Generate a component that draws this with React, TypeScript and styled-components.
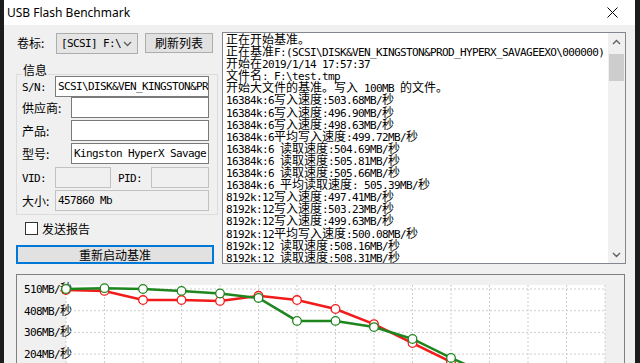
import React from 'react'
import styled, { createGlobalStyle } from 'styled-components'

const GlobalStyle = createGlobalStyle`
  html, body {
    margin: 0;
    padding: 0;
  }
  body {
    width: 640px;
    height: 363px;
    overflow: hidden;
    background: #1c1c1c;
    font-family: "Noto Sans CJK SC", "Noto Sans", sans-serif;
  }
`

const HAN = /([\u2e80-\u9fff\u3000-\u303f\uff00-\uffef]+)/

const Han = styled.span`
  font-family: "Noto Sans CJK SC", sans-serif;
  font-size: 12px;
  letter-spacing: 0;
`

const mixed = (text: string) =>
  text.split(HAN).map((part, i) => (i % 2 === 1 ? <Han key={i}>{part}</Han> : part))

const Window = styled.div`
  margin-left: 4px;
  width: 631px;
  height: 363px;
  overflow: hidden;
  background: #f0f0f0;
  display: flex;
  flex-direction: column;
`

const TitleBar = styled.div`
  flex: none;
  height: 25px;
  background: #fff;
  display: flex;
  align-items: center;
  justify-content: space-between;
  padding-left: 3px;
  font-family: "Noto Sans", sans-serif;
  font-size: 12px;
  color: #000;
`

const CloseButton = styled.div`
  width: 46px;
  height: 25px;
  display: flex;
  align-items: center;
  justify-content: center;
`

const Body = styled.div`
  padding: 7px 0 0 12px;
  display: flex;
  flex-direction: column;
`

const TopRow = styled.div`
  display: flex;
  align-items: flex-start;
  gap: 4px;
`

const LeftCol = styled.div`
  width: 202px;
  flex: none;
  display: flex;
  flex-direction: column;
`

const DriveRow = styled.div`
  margin-top: 1px;
  height: 21px;
  display: flex;
  align-items: flex-start;
`

const Label = styled.span<{ $w: number; $pad?: number }>`
  flex: none;
  width: ${(p) => p.$w}px;
  padding-left: ${(p) => p.$pad ?? 0}px;
  box-sizing: border-box;
  font-size: 12px;
  line-height: 16px;
  color: #000;
  white-space: nowrap;
`

const Mono = styled.span`
  font-family: "DejaVu Sans Mono", monospace;
  font-size: 11px;
  letter-spacing: -0.62px;
  color: #000;
  white-space: pre;
`

const Select = styled.div`
  width: 82px;
  height: 21px;
  box-sizing: border-box;
  border: 1px solid #adadad;
  background: #e5e5e5;
  display: flex;
  align-items: center;
  justify-content: space-between;
  padding: 0 5px 0 4px;
  overflow: hidden;
`

const Button = styled.div<{ $w: number; $h: number; $focused?: boolean }>`
  width: ${(p) => p.$w}px;
  height: ${(p) => p.$h}px;
  box-sizing: border-box;
  border: ${(p) => (p.$focused ? '2px solid #0078d7' : '1px solid #adadad')};
  background: #e1e1e1;
  display: flex;
  align-items: center;
  justify-content: center;
  font-size: 12px;
  line-height: 14px;
  color: #000;
`

const Group = styled.div`
  position: relative;
  margin-top: 20px;
  border: 1px solid #dcdcdc;
  padding: 1px 8px 3px 5px;
  display: flex;
  flex-direction: column;
`

const Legend = styled.span`
  position: absolute;
  top: -12px;
  left: 5px;
  padding: 0 1px;
  background: #f0f0f0;
  font-size: 12px;
  line-height: 14px;
  color: #000;
`

const Field = styled.div<{ $gap?: number }>`
  display: flex;
  align-items: center;
  height: 21px;
  margin-top: ${(p) => p.$gap ?? 0}px;
`

const TextBox = styled.div<{ $w: number; $disabled?: boolean; $ml?: number }>`
  flex: none;
  width: ${(p) => p.$w}px;
  height: 21px;
  margin-left: ${(p) => p.$ml ?? 0}px;
  box-sizing: border-box;
  border: 1px solid ${(p) => (p.$disabled ? '#c2c2c2' : '#7a7a7a')};
  background: ${(p) => (p.$disabled ? '#f0f0f0' : '#fff')};
  padding: 0 2px;
  display: flex;
  align-items: center;
  overflow: hidden;
`

const CheckRow = styled.div`
  margin-top: 7px;
  height: 13px;
  padding-left: 9px;
  display: flex;
  align-items: center;
  gap: 4px;
  font-size: 12px;
  line-height: 14px;
`

const CheckBox = styled.span`
  width: 13px;
  height: 13px;
  box-sizing: border-box;
  border: 1px solid #333;
  background: #fff;
`

const Log = styled.div`
  width: 404px;
  height: 232px;
  box-sizing: border-box;
  border: 1px solid #828790;
  background: #fff;
  display: flex;
`

const LogText = styled.div`
  flex: 1;
  padding-left: 3px;
  overflow: hidden;
  font-family: "DejaVu Sans Mono", monospace;
  font-size: 11px;
  letter-spacing: -0.62px;
  color: #000;
`

const LogLine = styled.div`
  height: 12.1px;
  line-height: 12px;
  white-space: pre;
`

const ScrollBar = styled.div`
  width: 17px;
  flex: none;
  background: #f0f0f0;
  display: flex;
  flex-direction: column;
  align-items: center;
`

const ScrollArrow = styled.div`
  width: 17px;
  height: 17px;
  flex: none;
  display: flex;
  align-items: center;
  justify-content: center;
`

const Thumb = styled.div`
  width: 15px;
  height: 27px;
  margin-top: 4px;
  background: #cdcdcd;
`

const Spacer = styled.div`
  flex: 1;
`

const ChartPanel = styled.div`
  flex: none;
  margin-top: 10px;
  width: 609px;
  height: 120px;
  box-sizing: border-box;
  border: 1px solid #7f7f7f;
  background: #f0f0f0;
`

const logLines = [
  '正在开始基准。',
  '正在基准F:(SCSI\\DISK&VEN_KINGSTON&PROD_HYPERX_SAVAGEEXO\\000000)',
  '开始在2019/1/14 17:57:37',
  '文件名: F:\\test.tmp',
  '开始大文件的基准。写入 100MB 的文件。',
  '16384k:6写入速度:503.68MB/秒',
  '16384k:6写入速度:496.90MB/秒',
  '16384k:6写入速度:498.63MB/秒',
  '16384k:6平均写入速度:499.72MB/秒',
  '16384k:6 读取速度:504.69MB/秒',
  '16384k:6 读取速度:505.81MB/秒',
  '16384k:6 读取速度:505.66MB/秒',
  '16384k:6 平均读取速度: 505.39MB/秒',
  '8192k:12写入速度:497.41MB/秒',
  '8192k:12写入速度:503.23MB/秒',
  '8192k:12写入速度:499.63MB/秒',
  '8192k:12平均写入速度:500.08MB/秒',
  '8192k:12 读取速度:508.16MB/秒',
  '8192k:12 读取速度:508.31MB/秒',
]

const writeSpeeds = [505, 501, 458, 458, 454, 478, 458, 416, 345, 256, 167, 78]
const readSpeeds = [510, 514, 510, 501, 489, 468, 360, 360, 331, 275, 186, 106]

const PLOT_X = 49
const PLOT_R = 588
const STEP_X = 38.5
const TOP_Y = 14
const STEP_Y = 21.7

const yOf = (v: number) => TOP_Y + ((510 - v) * STEP_Y) / 102

const Chevron = ({ up }: { up?: boolean }) => (
  <svg width="9" height="6" viewBox="0 0 9 6">
    <polyline
      points={up ? '1,5 4.5,1.5 8,5' : '1,1 4.5,4.5 8,1'}
      fill="none"
      stroke="#606060"
      strokeWidth="1.4"
    />
  </svg>
)

const Series = ({ data, color }: { data: number[]; color: string }) => {
  const pts = data.map((v, i) => [PLOT_X + i * STEP_X, yOf(v)])
  return (
    <g>
      <polyline points={pts.map((p) => p.join(',')).join(' ')} fill="none" stroke={color} strokeWidth="2.5" />
      {pts.map(([x, y], i) => (
        <circle key={i} cx={x} cy={y} r="4.3" fill="#fff" stroke={color} strokeWidth="1.3" />
      ))}
    </g>
  )
}

const Chart = () => (
  <svg width="607" height="118" viewBox="0 0 607 118">
    <rect x={PLOT_X} y="10" width={PLOT_R - PLOT_X} height="108" fill="#fff" />
    {Array.from({ length: 15 }, (_, i) => (
      <line
        key={'v' + i}
        x1={PLOT_X + i * STEP_X}
        x2={PLOT_X + i * STEP_X}
        y1="10"
        y2="118"
        stroke="#cdcdcd"
        strokeDasharray="2 2"
      />
    ))}
    {Array.from({ length: 6 }, (_, j) => (
      <line
        key={'h' + j}
        x1={PLOT_X}
        x2={PLOT_R}
        y1={TOP_Y + j * STEP_Y}
        y2={TOP_Y + j * STEP_Y}
        stroke="#cdcdcd"
        strokeDasharray="2 2"
      />
    ))}
    {[510, 408, 306, 204, 102].map((v, j) => (
      <text key={v} x="55" y={TOP_Y + j * STEP_Y + 4} textAnchor="end" fill="#000">
        <tspan fontFamily="DejaVu Sans Mono, monospace" fontSize="11" letterSpacing="-0.62">
          {v}MB/
        </tspan>
        <tspan fontFamily="Noto Sans CJK SC, sans-serif" fontSize="12">
          秒
        </tspan>
      </text>
    ))}
    <Series data={writeSpeeds} color="#f21b1b" />
    <Series data={readSpeeds} color="#1f861f" />
  </svg>
)

export default function App() {
  return (
    <>
      <GlobalStyle />
      <Window>
        <TitleBar>
          <span>USB Flash Benchmark</span>
          <CloseButton>
            <svg width="11" height="11" viewBox="0 0 11 11">
              <path d="M0.5 0.5 L10.5 10.5 M10.5 0.5 L0.5 10.5" stroke="#000" strokeWidth="1" />
            </svg>
          </CloseButton>
        </TitleBar>
        <Body>
          <TopRow>
            <LeftCol>
              <DriveRow>
                <Label $w={40} $pad={1} style={{ marginTop: 2 }}>
                  卷标:
                </Label>
                <Select>
                  <Mono>[SCSI] F:\</Mono>
                  <Chevron />
                </Select>
                <Button $w={68} $h={20} style={{ marginLeft: 7 }}>
                  刷新列表
                </Button>
              </DriveRow>
              <Group>
                <Legend>信息</Legend>
                <Field>
                  <Label $w={33}>
                    <Mono>S/N:</Mono>
                  </Label>
                  <TextBox $w={154}>
                    <Mono>SCSI\DISK&amp;VEN_KINGSTON&amp;PROD_HYPERX</Mono>
                  </TextBox>
                </Field>
                <Field>
                  <Label $w={49}>供应商:</Label>
                  <TextBox $w={138} />
                </Field>
                <Field $gap={2}>
                  <Label $w={49}>产品:</Label>
                  <TextBox $w={138} />
                </Field>
                <Field $gap={2}>
                  <Label $w={49}>型号:</Label>
                  <TextBox $w={138}>
                    <Mono>Kingston HyperX Savage EXO</Mono>
                  </TextBox>
                </Field>
                <Field $gap={3}>
                  <Label $w={33}>
                    <Mono>VID:</Mono>
                  </Label>
                  <TextBox $w={56} $disabled />
                  <Label $w={40} $pad={7}>
                    <Mono>PID:</Mono>
                  </Label>
                  <TextBox $w={58} $disabled />
                </Field>
                <Field $gap={2}>
                  <Label $w={33}>大小:</Label>
                  <TextBox $w={154} $disabled>
                    <Mono>457860 Mb</Mono>
                  </TextBox>
                </Field>
              </Group>
              <CheckRow>
                <CheckBox />
                <span>发送报告</span>
              </CheckRow>
              <Button $w={198} $h={19} $focused style={{ marginTop: 10 }}>
                重新启动基准
              </Button>
            </LeftCol>
            <Log>
              <LogText>
                {logLines.map((line, i) => (
                  <LogLine key={i}>{mixed(line)}</LogLine>
                ))}
              </LogText>
              <ScrollBar>
                <ScrollArrow>
                  <Chevron up />
                </ScrollArrow>
                <Thumb />
                <Spacer />
                <ScrollArrow>
                  <Chevron />
                </ScrollArrow>
              </ScrollBar>
            </Log>
          </TopRow>
          <ChartPanel>
            <Chart />
          </ChartPanel>
        </Body>
      </Window>
    </>
  )
}
